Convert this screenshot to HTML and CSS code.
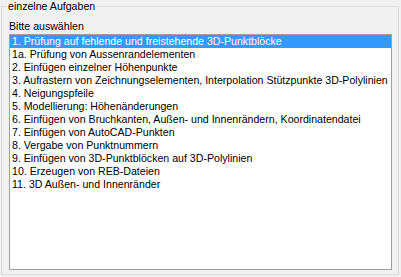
FILE: index.html
```html
<!DOCTYPE html>
<html>
<head>
<meta charset="utf-8">
<link rel="stylesheet" href="styles.css">
</head>
<body>
<div class="group">
  <div class="legend">einzelne Aufgaben</div>
  <div class="label">Bitte auswählen</div>
  <ul class="list">
    <li class="item selected">1. Prüfung auf fehlende und freistehende 3D-Punktblöcke</li>
    <li class="item">1a. Prüfung von Aussenrandelementen</li>
    <li class="item">2. Einfügen einzelner Höhenpunkte</li>
    <li class="item">3. Aufrastern von Zeichnungselementen, Interpolation Stützpunkte 3D-Polylinien</li>
    <li class="item">4. Neigungspfeile</li>
    <li class="item">5. Modellierung: Höhenänderungen</li>
    <li class="item">6. Einfügen von Bruchkanten, Außen- und Innenrändern, Koordinatendatei</li>
    <li class="item">7. Einfügen von AutoCAD-Punkten</li>
    <li class="item">8. Vergabe von Punktnummern</li>
    <li class="item">9. Einfügen von 3D-Punktblöcken auf 3D-Polylinien</li>
    <li class="item">10. Erzeugen von REB-Dateien</li>
    <li class="item">11. 3D Außen- und Innenränder</li>
  </ul>
</div>
</body>
</html>
```

FILE: styles.css
```css
html, body {
  margin: 0;
  padding: 0;
  background: #f0f0f0;
}
body {
  width: 401px;
  height: 277px;
  overflow: hidden;
  font-family: "Liberation Sans", Arial, sans-serif;
  font-size: 10.6px;
  color: #000;
}
.group {
  position: relative;
  margin: 6px 0 0 1px;
  width: 396px;
  height: 267px;
  border: 1px solid #dcdcdc;
  padding: 0;
  box-sizing: content-box;
  display: flex;
  flex-direction: column;
}
.legend {
  position: absolute;
  left: 5px;
  top: -7px;
  padding: 0 1px 0 1px;
  background: #f0f0f0;
  line-height: 13px;
}
.label {
  margin: 13px 0 0 7px;
  line-height: 13px;
  height: 14px;
}
.list {
  list-style: none;
  margin: 0 0 0 7px;
  padding: 0;
  width: 381px;
  height: 234px;
  border: 1px solid #a0a0a0;
  background: #fff;
}
.item {
  height: 13px;
  line-height: 13px;
  padding-left: 2px;
  white-space: nowrap;
  overflow: hidden;
}
.selected {
  background: #3399ff;
  color: #fff;
}
```
